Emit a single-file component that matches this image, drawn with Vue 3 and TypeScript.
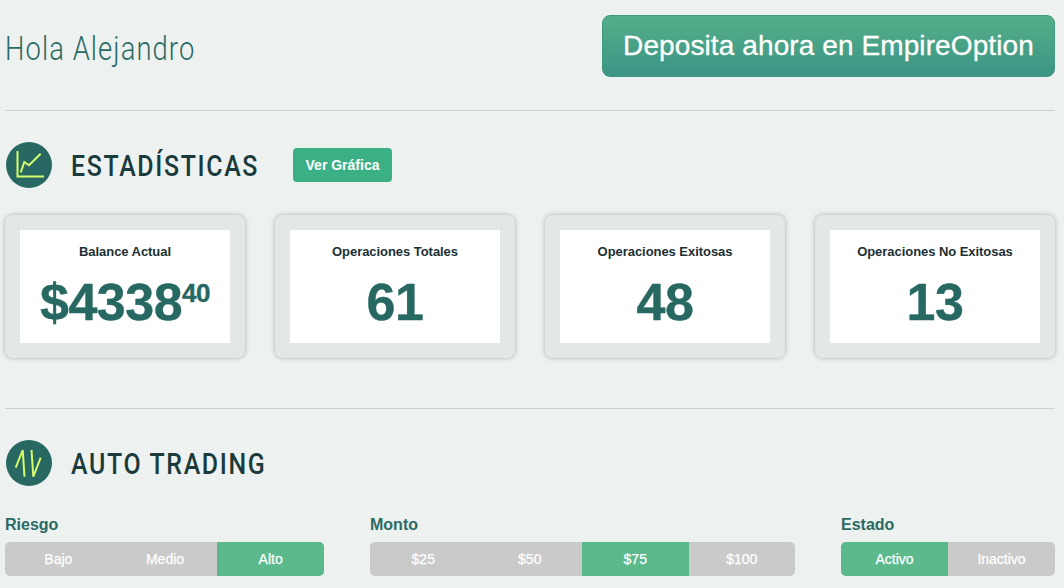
<script setup lang="ts">
interface Stat {
  label: string
  value: string
  cents?: string
}

interface Control {
  label: string
  width: number
  options: string[]
  active: string
}

const stats: Stat[] = [
  { label: 'Balance Actual', value: '$4338', cents: '40' },
  { label: 'Operaciones Totales', value: '61' },
  { label: 'Operaciones Exitosas', value: '48' },
  { label: 'Operaciones No Exitosas', value: '13' },
]

const controls: Control[] = [
  { label: 'Riesgo', width: 319, options: ['Bajo', 'Medio', 'Alto'], active: 'Alto' },
  { label: 'Monto', width: 425, options: ['$25', '$50', '$75', '$100'], active: '$75' },
  { label: 'Estado', width: 214, options: ['Activo', 'Inactivo'], active: 'Activo' },
]
</script>

<template>
  <div class="page">
    <header class="top">
      <h1 class="hello">Hola Alejandro</h1>
      <a class="deposit">Deposita ahora en EmpireOption</a>
    </header>

    <section class="stats">
      <div class="section-head">
        <span class="badge">
          <svg width="46" height="46" viewBox="0 0 46 46" fill="none" stroke="#d6fb6c" stroke-width="2">
            <path d="M11.5 9V34.5H38" />
            <path d="M14.7 30.5L18.3 20L23 23.3L34.7 11.7" />
          </svg>
        </span>
        <h2 class="title">ESTADÍSTICAS</h2>
        <a class="chart-btn">Ver Gráfica</a>
      </div>

      <div class="cards">
        <div v-for="stat in stats" :key="stat.label" class="card">
          <div class="card-inner">
            <div class="card-label">{{ stat.label }}</div>
            <div class="card-value">{{ stat.value }}<sup v-if="stat.cents">{{ stat.cents }}</sup></div>
          </div>
        </div>
      </div>
    </section>

    <section class="auto">
      <div class="section-head">
        <span class="badge">
          <svg width="46" height="46" viewBox="0 0 46 46" fill="none" stroke="#d6fb6c" stroke-width="2">
            <path d="M9.7 27.7L16.7 10L18.5 36.7" />
            <path d="M25.5 10L27.3 36.7L34.7 17.7" />
          </svg>
        </span>
        <h2 class="title">AUTO TRADING</h2>
      </div>

      <div class="controls">
        <div v-for="control in controls" :key="control.label" :style="{ width: control.width + 'px' }">
          <div class="control-label">{{ control.label }}</div>
          <div class="segments">
            <span
              v-for="opt in control.options"
              :key="opt"
              class="segment"
              :class="{ on: opt === control.active }"
            >{{ opt }}</span>
          </div>
        </div>
      </div>
    </section>
  </div>
</template>

<style scoped>
.page {
  width: 1050px;
  padding: 15px 9px 0 5px;
  height: 573px;
  overflow: hidden;
  font-family: "Liberation Sans", Arial, sans-serif;
}

.top {
  display: flex;
  justify-content: space-between;
  align-items: center;
  height: 62px;
  padding-bottom: 33px;
  border-bottom: 1px solid #cfd1d0;
}

.hello {
  margin: 4px 0 0;
  font-family: Roboto, sans-serif;
  font-weight: 300;
  font-size: 33px;
  letter-spacing: 1.3px;
  color: #2a6a64;
  white-space: nowrap;
  transform: scaleX(0.83);
  transform-origin: left center;
}

.deposit {
  width: 453px;
  height: 62px;
  box-sizing: border-box;
  display: flex;
  align-items: center;
  justify-content: center;
  border-radius: 8px;
  border: 1px solid #3f9a80;
  background: linear-gradient(#55ae89, #3b9585);
  color: #fff;
  font-size: 28px;
  letter-spacing: 0.1px;
  -webkit-text-stroke: 0.3px #fff;
}

.stats {
  height: 298px;
  padding-top: 31px;
  box-sizing: border-box;
  border-bottom: 1px solid #cfd1d0;
}

.section-head {
  display: flex;
  align-items: center;
  height: 46px;
  padding-left: 1px;
}

.badge {
  width: 46px;
  height: 46px;
  border-radius: 50%;
  background: #276962;
  flex: none;
}

.badge svg {
  display: block;
}

.title {
  margin: 0 0 0 19px;
  width: 222px;
  font-family: Roboto, sans-serif;
  font-weight: 500;
  font-size: 30px;
  letter-spacing: 2px;
  color: #1b3a3c;
  white-space: nowrap;
  transform: scaleX(0.83);
  transform-origin: left center;
}

.chart-btn {
  width: 99px;
  height: 34px;
  display: flex;
  align-items: center;
  justify-content: center;
  border-radius: 4px;
  background: #3cb085;
  color: #fff;
  font-size: 14px;
  font-weight: 700;
}

.cards {
  display: flex;
  justify-content: space-between;
  margin-top: 27px;
}

.card {
  width: 240px;
  height: 143px;
  box-sizing: border-box;
  padding: 15px;
  border-radius: 8px;
  background: #e1e8e6;
  box-shadow: 0 0 5px rgba(0, 0, 0, 0.28);
}

.card-inner {
  height: 113px;
  background: #fff;
  text-align: center;
}

.card-label {
  padding-top: 14px;
  font-size: 13px;
  line-height: 15px;
  font-weight: 700;
  letter-spacing: -0.05px;
  color: #1b3035;
}

.card-value {
  margin-top: 13px;
  font-size: 52px;
  line-height: 60px;
  font-weight: 700;
  color: #276962;
  letter-spacing: -0.5px;
  -webkit-text-stroke: 0.4px #276962;
}

.card-value sup {
  font-size: 26px;
  line-height: 0;
  vertical-align: 18px;
}

.auto {
  padding-top: 31px;
}

.controls {
  display: flex;
  justify-content: space-between;
  margin-top: 30px;
}

.control-label {
  font-size: 16px;
  line-height: 18px;
  font-weight: 700;
  color: #2a6a64;
}

.segments {
  display: flex;
  margin-top: 8px;
  height: 34px;
  border-radius: 5px;
  overflow: hidden;
  background: #cacaca;
}

.segment {
  flex: 1;
  display: flex;
  align-items: center;
  justify-content: center;
  color: #fff;
  font-size: 14px;
  -webkit-text-stroke: 0.25px #fff;
}

.segment.on {
  background: #5cb98c;
}

.segment.on:not(:first-child) {
  margin-left: -1px;
}
</style>

<style>
html, body {
  background: #edf1f0;
}
</style>
